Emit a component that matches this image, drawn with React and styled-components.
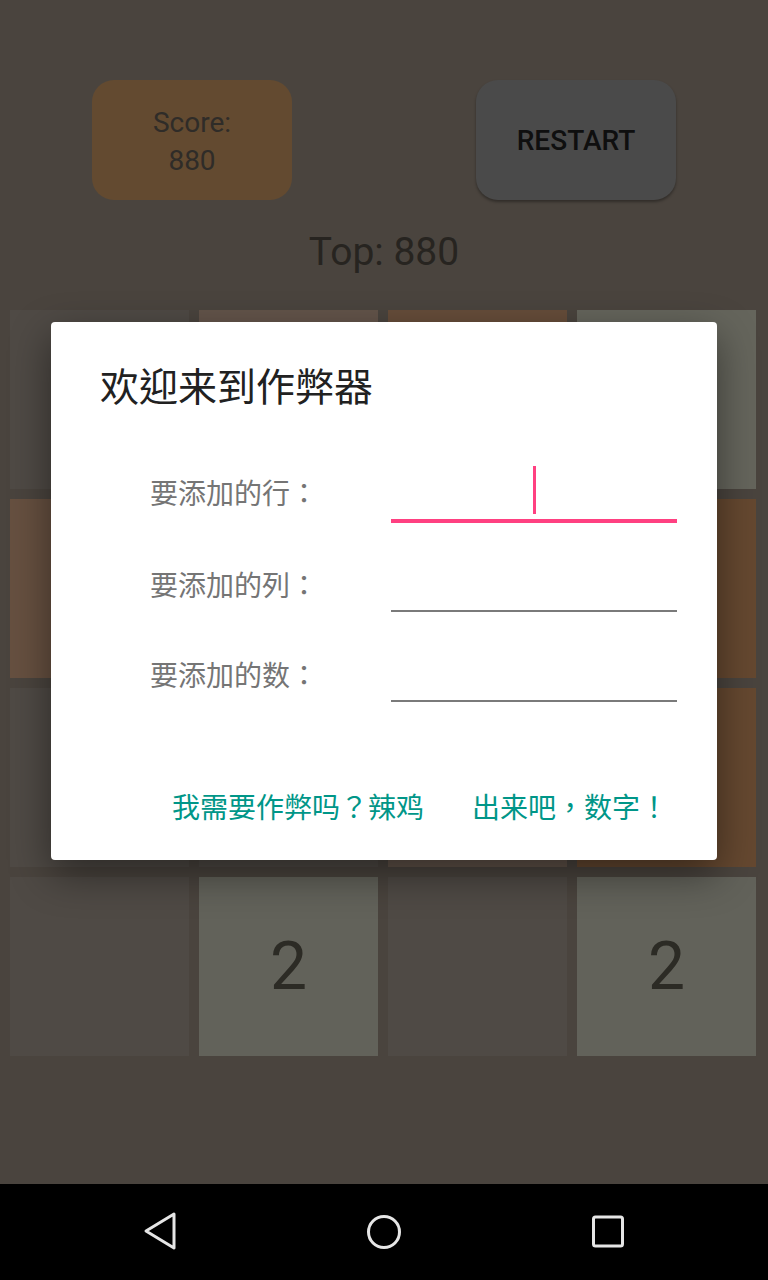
import React from 'react';
import styled, { createGlobalStyle } from 'styled-components';

const GlobalStyle = createGlobalStyle`
  html, body {
    margin: 0;
    padding: 0;
    background: #000;
  }
  body {
    font-family: Roboto, "Noto Sans CJK TC", sans-serif;
  }
`;

const Phone = styled.div`
  width: 768px;
  height: 1280px;
  display: flex;
  flex-direction: column;
  overflow: hidden;
`;

const Screen = styled.div`
  position: relative;
  height: 1184px;
  background: #b9aa9b;
  display: flex;
  flex-direction: column;
`;

const Header = styled.div`
  display: flex;
  padding-top: 80px;
`;

const HeaderCell = styled.div`
  flex: 1;
  display: flex;
  justify-content: center;
`;

const ScoreBox = styled.div`
  width: 200px;
  height: 120px;
  box-sizing: border-box;
  padding-top: 4px;
  border-radius: 22px;
  background: #f7b978;
  color: #776e65;
  font-size: 28px;
  line-height: 38px;
  display: flex;
  flex-direction: column;
  align-items: center;
  justify-content: center;
`;

const RestartButton = styled.div`
  width: 200px;
  height: 120px;
  border-radius: 22px;
  background: #b9b9b9;
  color: #262626;
  font-size: 28px;
  font-weight: 500;
  display: flex;
  align-items: center;
  justify-content: center;
  box-shadow: 0 2px 3px rgba(0, 0, 0, 0.35);
`;

const TopScore = styled.div`
  margin-top: 26px;
  height: 52px;
  line-height: 52px;
  text-align: center;
  font-size: 39px;
  color: #615a52;
`;

const Board = styled.div`
  margin-top: 32px;
  padding: 0 10px;
  display: grid;
  grid-template-columns: repeat(4, 179px);
  grid-auto-rows: 179px;
  gap: 10px;
`;

const Tile = styled.div`
  background: ${(p) => p.$bg};
  color: #6f6b5c;
  font-size: 66px;
  display: flex;
  align-items: center;
  justify-content: center;
`;

const Scrim = styled.div`
  position: absolute;
  inset: 0;
  background: rgba(0, 0, 0, 0.6);
  display: flex;
  align-items: center;
  justify-content: center;
`;

const Dialog = styled.div`
  width: 666px;
  height: 538px;
  margin-top: -2px;
  box-sizing: border-box;
  background: #fff;
  border-radius: 4px;
  box-shadow: 0 14px 40px rgba(0, 0, 0, 0.45);
  padding-top: 38px;
  display: flex;
  flex-direction: column;
  font-family: "Noto Sans CJK TC", Roboto, sans-serif;
`;

const Title = styled.div`
  padding-left: 49px;
  height: 48px;
  line-height: 48px;
  font-size: 39px;
  color: #212121;
`;

const Form = styled.div`
  margin-top: 25px;
  padding: 0 40px 0 99px;
  display: flex;
  flex-direction: column;
`;

const Row = styled.div`
  height: 90px;
  display: flex;
  align-items: flex-end;
`;

const Label = styled.div`
  width: 241px;
  font-size: 28px;
  line-height: 40px;
  margin-bottom: ${(p) => (p.$focused ? '11px' : '9px')};
  color: #757575;
`;

const Field = styled.div`
  flex: 1;
  height: 60px;
  box-sizing: border-box;
  display: flex;
  align-items: flex-end;
  justify-content: center;
  padding-bottom: 5px;
  border-bottom: ${(p) => (p.$focused ? '4px solid #ff4081' : '2px solid #7a7a7a')};
  margin-bottom: ${(p) => (p.$focused ? '0' : '1px')};
`;

const Caret = styled.span`
  width: 3px;
  height: 48px;
  background: #ff4081;
`;

const Actions = styled.div`
  margin-top: auto;
  margin-bottom: 18px;
  padding-right: 33px;
  display: flex;
  justify-content: flex-end;
  gap: 16px;
`;

const ActionButton = styled.div`
  height: 72px;
  padding: 0 16px;
  display: flex;
  align-items: center;
  font-size: 28px;
  color: #009688;
`;

const NavBar = styled.div`
  height: 96px;
  background: #000;
  display: grid;
  grid-template-columns: repeat(3, 224px);
  justify-content: center;
  align-items: center;
`;

const NavSlot = styled.div`
  display: flex;
  justify-content: center;
  align-items: center;
  height: 96px;
`;

const tiles = [
  { bg: '#c6b9ad' }, { bg: '#f8d2b9' }, { bg: '#ffc191' }, { bg: '#fcfce6' },
  { bg: '#ffc8a0' }, { bg: '#c6b9ad' }, { bg: '#c6b9ad' }, { bg: '#fdb478' },
  { bg: '#c6b9ad' }, { bg: '#c6b9ad' }, { bg: '#f2d0b6' }, { bg: '#fdb478' },
  { bg: '#c6b9ad' }, { bg: '#f5f5e1', v: 2 }, { bg: '#c6b9ad' }, { bg: '#f5f5e1', v: 2 },
];

const fields = [
  { label: '要添加的行：', focused: true },
  { label: '要添加的列：' },
  { label: '要添加的数：' },
];

export default function App() {
  return (
    <Phone>
      <GlobalStyle />
      <Screen>
        <Header>
          <HeaderCell>
            <ScoreBox>
              <span>Score:</span>
              <span>880</span>
            </ScoreBox>
          </HeaderCell>
          <HeaderCell>
            <RestartButton>RESTART</RestartButton>
          </HeaderCell>
        </Header>
        <TopScore>Top: 880</TopScore>
        <Board>
          {tiles.map((t, i) => (
            <Tile key={i} $bg={t.bg}>{t.v}</Tile>
          ))}
        </Board>

        <Scrim>
          <Dialog>
            <Title>欢迎来到作弊器</Title>
            <Form>
              {fields.map((f) => (
                <Row key={f.label}>
                  <Label $focused={f.focused}>{f.label}</Label>
                  <Field $focused={f.focused}>{f.focused && <Caret />}</Field>
                </Row>
              ))}
            </Form>
            <Actions>
              <ActionButton>我需要作弊吗？辣鸡</ActionButton>
              <ActionButton>出来吧，数字！</ActionButton>
            </Actions>
          </Dialog>
        </Scrim>
      </Screen>

      <NavBar>
        <NavSlot>
          <svg width="40" height="44" viewBox="0 0 40 44">
            <path d="M34 4 L6 21 L34 38 Z" fill="none" stroke="#e6e6e6" strokeWidth="3" strokeLinejoin="round" />
          </svg>
        </NavSlot>
        <NavSlot>
          <svg width="40" height="40" viewBox="0 0 40 40">
            <circle cx="20" cy="20" r="15.5" fill="none" stroke="#e6e6e6" strokeWidth="3" />
          </svg>
        </NavSlot>
        <NavSlot>
          <svg width="40" height="40" viewBox="0 0 40 40">
            <rect x="5.5" y="5" width="29" height="29" rx="2" fill="none" stroke="#e6e6e6" strokeWidth="3" />
          </svg>
        </NavSlot>
      </NavBar>
    </Phone>
  );
}
